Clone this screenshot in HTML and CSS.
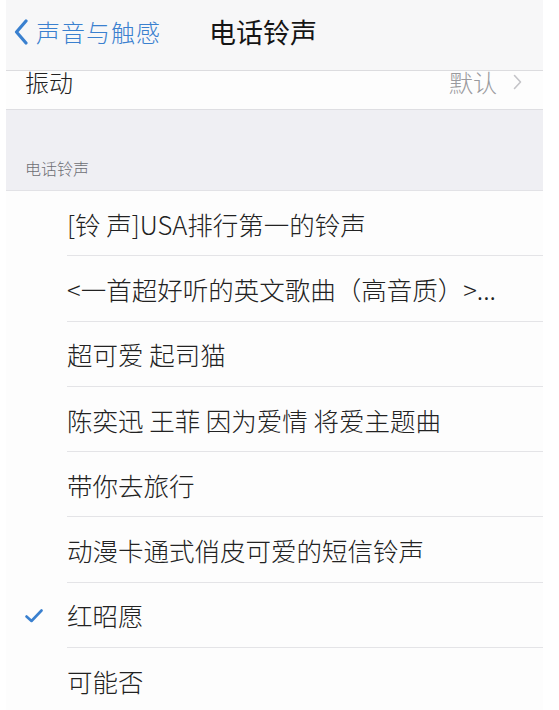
FILE: index.html
```html
<!DOCTYPE html>
<html lang="zh-CN">
<head>
  <meta charset="UTF-8">
  <meta name="viewport" content="width=device-width, initial-scale=1.0">
  <title>电话铃声</title>
  <link rel="stylesheet" href="styles.css">
</head>
<body>

  <div class="screen">
    <div class="navbar">
      <a class="back" href="#">
        <svg class="back-icon" viewBox="0 0 14 26" width="14" height="26">
          <path d="M12 2 L2.5 13 L12 24" fill="none" stroke="currentColor" stroke-width="3.2" stroke-linecap="round" stroke-linejoin="round"/>
        </svg>
        声音与触感
      </a>
      <span class="title">电话铃声</span>
    </div>

    <div class="row-partial">
      <span class="label">振动</span>
      <span class="value">默认
        <svg viewBox="0 0 9 16" width="9" height="16">
          <path d="M1.5 1.5 L7.5 8 L1.5 14.5" fill="none" stroke="currentColor" stroke-width="1.6" stroke-linecap="round" stroke-linejoin="round"/>
        </svg>
      </span>
    </div>

    <div class="section-header">电话铃声</div>

    <ul class="tone-list">
      <li class="tone">[铃 声]USA排行第一的铃声</li>
      <li class="tone">&lt;一首超好听的英文歌曲（高音质）&gt;...</li>
      <li class="tone">超可爱 起司猫</li>
      <li class="tone">陈奕迅 王菲 因为爱情 将爱主题曲</li>
      <li class="tone">带你去旅行</li>
      <li class="tone">动漫卡通式俏皮可爱的短信铃声</li>
      <li class="tone selected">
        <svg class="check" viewBox="0 0 18 14" width="18" height="14">
          <path d="M1.5 7.5 L6.5 12 L16.5 1.5" fill="none" stroke="currentColor" stroke-width="2.6" stroke-linecap="round" stroke-linejoin="round"/>
        </svg>
        红昭愿
      </li>
      <li class="tone">可能否</li>
    </ul>
  </div>

</body>
</html>
```

FILE: styles.css
```css
* {
  margin: 0;
  padding: 0;
  box-sizing: border-box;
}

body {
  font-family: "Noto Sans CJK SC", "Noto Sans", sans-serif;
  font-weight: 300;
  background: #fff;
  color: #222;
}

.screen {
  width: 537px;
  margin-left: 6px;
  background: #fdfdfd;
}

/* top navigation */
.navbar {
  height: 71px;
  display: flex;
  align-items: center;
  background: #f7f7f8;
  border-bottom: 1px solid #dcdcdf;
  padding: 0 0 8px 8px;
}

.back {
  display: flex;
  align-items: center;
  gap: 8px;
  color: #3a80cf;
  text-decoration: none;
  font-size: 24px;
  letter-spacing: 1px;
}

.back-icon {
  margin-top: 1px;
}

.title {
  margin-left: 48px;
  font-size: 27px;
  font-weight: 400;
  color: #151515;
}

/* row scrolled under the bar */
.row-partial {
  height: 39px;
  display: flex;
  justify-content: space-between;
  align-items: center;
  padding: 0 21px 16px 19px;
  border-bottom: 1px solid #dedee2;
  background: #fdfdfd;
}

.row-partial .label {
  font-size: 24px;
  line-height: 24px;
  color: #222;
}

.row-partial .value {
  display: flex;
  align-items: center;
  gap: 16px;
  font-size: 24px;
  line-height: 24px;
  color: #9a9a9e;
}

.row-partial .value svg {
  color: #c4c4c8;
}

.section-header {
  height: 81px;
  background: #efeff3;
  display: flex;
  align-items: flex-end;
  padding: 0 0 10px 19px;
  font-size: 16px;
  color: #6e6e73;
  border-bottom: 1px solid #e2e2e6;
}

.tone-list {
  list-style: none;
}

.tone {
  position: relative;
  height: 65.3px;
  display: flex;
  align-items: center;
  margin-left: 61px;
  font-size: 25.5px;
  color: #222;
  border-bottom: 1px solid #e4e4e7;
}

.tone:last-child {
  border-bottom: none;
}

.check {
  position: absolute;
  left: -42px;
  top: 26px;
  color: #3a80cf;
}
```
